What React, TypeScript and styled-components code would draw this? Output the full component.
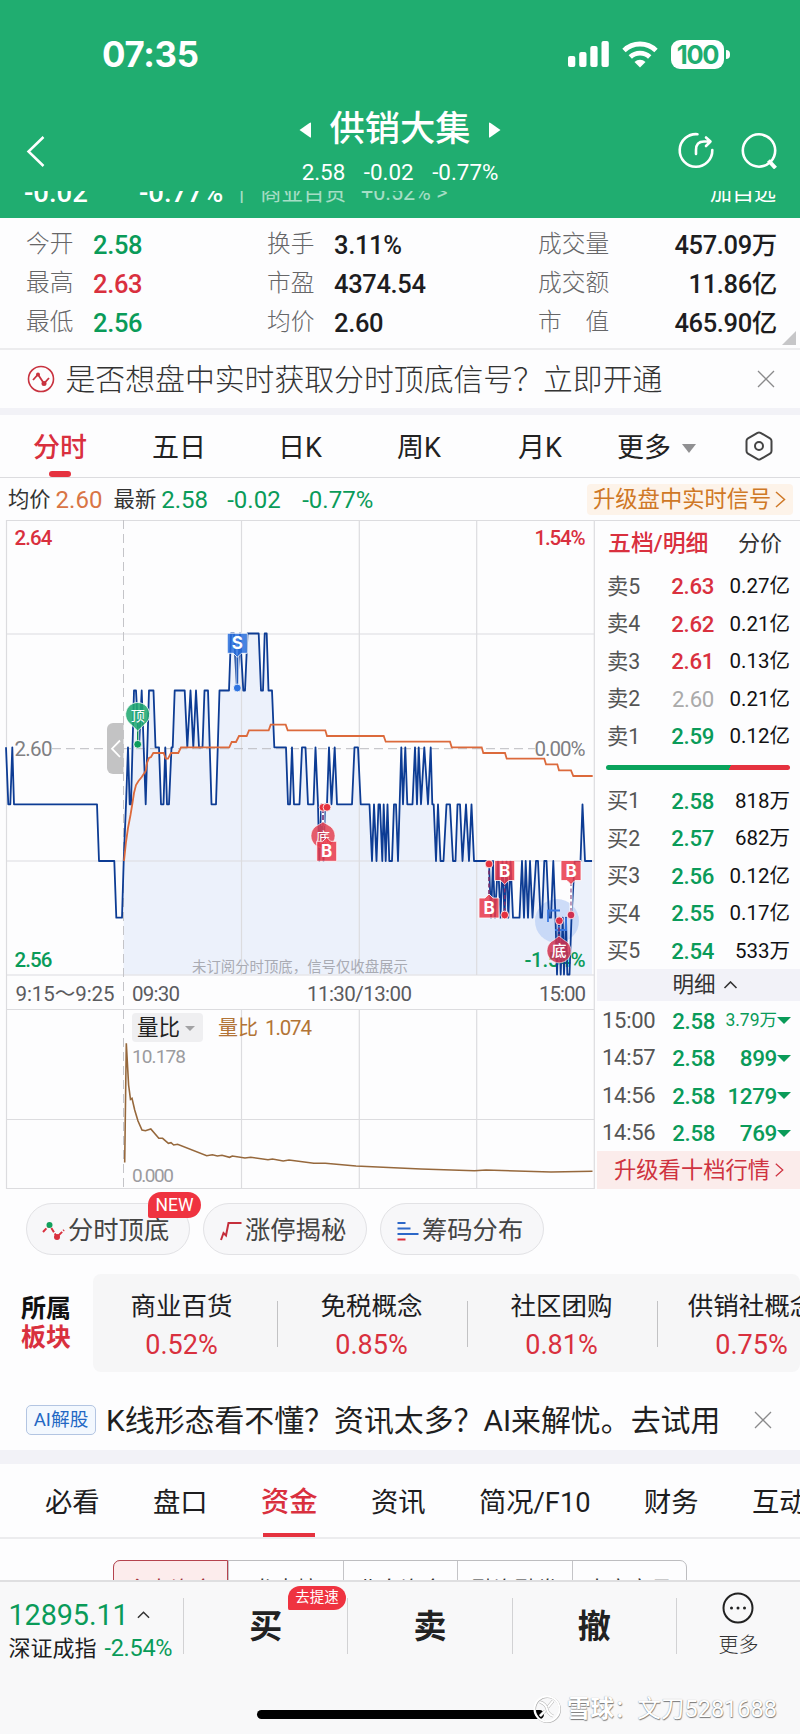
import React from "react";
import styled, { createGlobalStyle, css } from "styled-components";

const GREEN = "#0a9b59";
const RED = "#d9303e";
const HAIR = "#dcdcdf";

const GlobalStyle = createGlobalStyle`
  * { box-sizing: border-box; }
  body { margin: 0; background: #fdfdfe; }
`;

const Screen = styled.main`
  position: relative;
  width: 800px;
  height: 1734px;
  overflow: hidden;
  display: flex;
  flex-direction: column;
  background: #fdfdfe;
  color: #1d1d1f;
  font-family: Roboto, "Noto Sans CJK SC", sans-serif;
  white-space: nowrap;
  line-height: 1;
`;

/* ---------- header ---------- */

const Header = styled.header`
  height: 218px;
  flex: none;
  display: flex;
  flex-direction: column;
  background: #20ad70;
  color: #fff;
  overflow: hidden;
`;

const StatusBar = styled.div`
  height: 108px;
  flex: none;
  display: flex;
  align-items: center;
  justify-content: space-between;
  padding: 0 70px 0 102px;
`;

const Clock = styled.span`
  font: 700 34.8px/1 Inter, sans-serif;
  letter-spacing: -0.3px;
  padding-top: 1px;
`;

const StatusIcons = styled.div`
  display: flex;
  align-items: center;
  gap: 13px;
`;

const Battery = styled.div`
  position: relative;
  width: 53px;
  height: 29px;
  border-radius: 9px;
  background: #fff;
  color: #20ad70;
  font: 700 25.5px/29px Inter, sans-serif;
  letter-spacing: -1.3px;
  text-align: center;
  margin-right: 6px;
  &::after {
    content: "";
    position: absolute;
    right: -6px;
    top: 10px;
    width: 4px;
    height: 9px;
    border-radius: 0 4px 4px 0;
    background: #fff;
  }
`;

const NavRow = styled.div`
  height: 83px;
  flex: none;
  display: grid;
  grid-template-columns: 200px 400px 200px;
`;

const NavLeft = styled.div`
  padding: 28px 0 0 26px;
`;

const NavCenter = styled.div`
  display: flex;
  flex-direction: column;
  align-items: center;
`;

const StockTitle = styled.div`
  display: flex;
  align-items: center;
  gap: 18.5px;
  height: 42px;
  padding-top: 1px;
  font-size: 35.3px;
  font-weight: 500;
`;

const StockQuote = styled.div`
  display: flex;
  gap: 18.5px;
  margin-top: 10px;
  font-size: 22.4px;
  line-height: 24px;
`;

const NavRight = styled.div`
  display: flex;
  justify-content: flex-end;
  gap: 25px;
  padding: 23px 22px 0 0;
`;

const ScrolledRow = styled.div`
  height: 12px;
  overflow: hidden;
  display: flex;
  align-items: flex-end;
  padding: 0 24px 1px;
  font-size: 24px;
  line-height: 18px;
`;

const ScrolledItem = styled.span<{ $w: number; $bold?: boolean; $dim?: boolean; $end?: boolean }>`
  width: ${(p) => p.$w}px;
  ${(p) => p.$end && css`margin-left: auto; text-align: right;`}
  font-size: ${(p) => (p.$bold ? 27.5 : p.$dim ? 21.5 : 22)}px;
  font-weight: ${(p) => (p.$bold ? 500 : 400)};
  opacity: ${(p) => (p.$dim ? 0.6 : 1)};
`;

/* ---------- statistics ---------- */

const Stats = styled.section`
  position: relative;
  height: 132px;
  flex: none;
  display: grid;
  grid-template-columns: 241px 271px 239px;
  padding: 7px 0 0 26px;
  border-bottom: 2px solid #ececee;
`;

const StatColumn = styled.div`
  display: flex;
  flex-direction: column;
`;

const StatRow = styled.div<{ $spread?: boolean }>`
  height: 39px;
  display: flex;
  align-items: center;
  justify-content: ${(p) => (p.$spread ? "space-between" : "flex-start")};
`;

const StatLabel = styled.span<{ $w?: number }>`
  width: ${(p) => p.$w ?? 67}px;
  font-size: 23.7px;
  font-weight: 300;
  color: #666668;
  white-space: pre;
`;

const StatValue = styled.span<{ $color?: string }>`
  font-size: 25.5px;
  font-weight: 500;
  letter-spacing: -0.35px;
  padding-top: 3px;
  color: ${(p) => p.$color ?? "#1d1d1f"};
`;

const Corner = styled.i`
  position: absolute;
  right: 4px;
  bottom: 3px;
  border-left: 14px solid transparent;
  border-bottom: 14px solid #c6c6c8;
`;

/* ---------- notices ---------- */

const Notice = styled.section`
  height: 58px;
  flex: none;
  display: flex;
  align-items: center;
  padding: 0 25px 0 27px;
`;

const NoticeText = styled.span<{ $dark?: boolean }>`
  flex: 1;
  font-size: ${(p) => (p.$dark ? 29.9 : 29.85)}px;
  font-weight: ${(p) => (p.$dark ? 400 : 300)};
  color: ${(p) => (p.$dark ? "#1f1f21" : "#333")};
  margin-left: ${(p) => (p.$dark ? 10 : 10.5)}px;
  padding-top: 2px;
`;

const Band = styled.div<{ $h: number }>`
  height: ${(p) => p.$h}px;
  flex: none;
  background: #f2f2f7;
`;

/* ---------- period tabs ---------- */

const PeriodTabs = styled.nav`
  height: 63px;
  flex: none;
  display: flex;
  align-items: stretch;
  border-bottom: 1.5px solid ${HAIR};
`;

const PeriodTab = styled.div<{ $active?: boolean; $w: number }>`
  width: ${(p) => p.$w}px;
  flex: none;
  position: relative;
  display: flex;
  justify-content: center;
  align-items: center;
  gap: 11px;
  padding-top: 4px;
  font-size: 27px;
  font-weight: ${(p) => (p.$active ? 500 : 400)};
  color: ${(p) => (p.$active ? RED : "#222")};
  &:last-child {
    margin-left: auto;
    padding-top: 0;
  }
  ${(p) =>
    p.$active &&
    css`
      &::after {
        content: "";
        position: absolute;
        bottom: 0;
        left: 50%;
        margin-left: -11px;
        width: 22px;
        height: 6px;
        border-radius: 3px;
        background: #e5323f;
      }
    `}
`;

const DownArrow = styled.i<{ $size: number; $depth: number; $color?: string }>`
  border: ${(p) => p.$size}px solid transparent;
  border-top: ${(p) => p.$depth}px solid ${(p) => p.$color ?? "#909092"};
  border-bottom: 0;
`;

/* ---------- average/last line ---------- */

const InfoLine = styled.section`
  height: 42px;
  flex: none;
  display: flex;
  align-items: center;
  padding: 0 7px 0 8px;
`;

const InfoLabel = styled.span`
  font-size: 21.3px;
  color: #333;
  margin-right: 5px;
  padding-top: 1px;
`;

const InfoValue = styled.span<{ $color: string; $w: number }>`
  width: ${(p) => p.$w}px;
  padding-top: 2px;
  font-size: 24px;
  color: ${(p) => p.$color};
`;

const UpgradeTag = styled.div`
  margin-left: auto;
  height: 31px;
  width: 206px;
  padding-left: 6px;
  display: flex;
  align-items: center;
  gap: 4px;
  border-radius: 4px;
  background: #fdf3e9;
  color: #cf7826;
  font-size: 22.3px;
`;

/* ---------- market area ---------- */

const Market = styled.section`
  height: 669px;
  flex: none;
  display: grid;
  grid-template-columns: 595px 205px;
`;

const Book = styled.aside`
  display: flex;
  flex-direction: column;
  border-top: 1px solid ${HAIR};
`;

const BookTabs = styled.div`
  height: 46px;
  display: flex;
  align-items: center;
  justify-content: space-between;
  padding: 0 18px 0 13px;
  font-size: 22.2px;
`;

const BookTab = styled.span<{ $active?: boolean }>`
  color: ${(p) => (p.$active ? RED : "#333")};
  font-size: ${(p) => (p.$active ? 22.9 : 22)}px;
  font-weight: ${(p) => (p.$active ? 500 : 400)};
`;

const Level = styled.div<{ $trade?: boolean }>`
  height: 37.5px;
  display: grid;
  align-items: center;
  grid-template-columns: ${(p) => (p.$trade ? "60px 56px 59px 14px" : "53px 57px 73px")};
  justify-content: start;
  padding-top: ${(p) => (p.$trade ? 2 : 1)}px;
  padding-left: ${(p) => (p.$trade ? 7 : 12)}px;
`;

const LevelLabel = styled.span<{ $time?: boolean }>`
  font-size: ${(p) => (p.$time ? 22 : 21.3)}px;
  letter-spacing: ${(p) => (p.$time ? -0.3 : 0)}px;
  color: #555;
`;

const LevelPrice = styled.span<{ $color: string }>`
  font-size: 22.2px;
  text-align: right;
  padding-right: 3px;
  letter-spacing: -0.3px;
  font-weight: ${(p) => (p.$color === "#aaa" ? 400 : 500)};
  color: ${(p) => p.$color};
`;

const LevelVolume = styled.span<{ $color?: string; $small?: boolean }>`
  font-size: ${(p) => (p.$small ? 17.5 : p.$color ? 22.5 : 20.5)}px;
  text-align: right;
  color: ${(p) => p.$color ?? "#111113"};
  font-weight: ${(p) => (p.$small ? 400 : p.$color ? 500 : 400)};
  letter-spacing: ${(p) => (p.$color && !p.$small ? -0.4 : 0)}px;
`;

const RatioBar = styled.div`
  height: 5px;
  margin: 10px 10px 12px 11px;
  flex: none;
  border-radius: 3px;
  background: linear-gradient(120deg, #0aa35c 0 67%, #e5323f 67%);
`;

const DetailBar = styled.div`
  height: 32px;
  display: flex;
  align-items: center;
  justify-content: center;
  gap: 7px;
  padding-left: 13px;
  margin-left: 2px;
  background: #f2f2f8;
  color: #333;
  font-size: 21.5px;
`;

const TenLevels = styled.div`
  flex: 1;
  display: flex;
  align-items: center;
  gap: 4px;
  padding-left: 17px;
  margin-left: 2px;
  background: #fbeceb;
  color: #cf3340;
  font-size: 22.3px;
`;

/* ---------- tool chips ---------- */

const Chips = styled.section`
  height: 85px;
  flex: none;
  display: flex;
  gap: 13px;
  padding: 14px 26px 0;
`;

const Chip = styled.div`
  position: relative;
  width: 164px;
  height: 52px;
  display: flex;
  align-items: center;
  gap: 3px;
  padding: 3px 0 0 15px;
  border: 1px solid #e2e2e5;
  border-radius: 26px;
  background: #f7f7f9;
  color: #444;
  font-size: 25.3px;
`;

const Flag = styled.b<{ $top: number; $left: number; $w: number; $h: number; $size: number }>`
  position: absolute;
  top: ${(p) => p.$top}px;
  left: ${(p) => p.$left}px;
  width: ${(p) => p.$w}px;
  height: ${(p) => p.$h}px;
  border-radius: 13px 13px 13px 2px;
  background: #ef3340;
  color: #fff;
  font-size: ${(p) => p.$size}px;
  font-weight: 400;
  line-height: ${(p) => p.$h}px;
  text-align: center;
`;

/* ---------- sectors ---------- */

const Sectors = styled.section`
  height: 98px;
  flex: none;
  display: flex;
`;

const SectorHeading = styled.div`
  width: 93px;
  flex: none;
  padding: 20px 0 0 21px;
  font-size: 25px;
  font-weight: 700;
  line-height: 29px;
  color: #111;
  em {
    display: block;
    font-style: normal;
    color: ${RED};
  }
`;

const SectorTrack = styled.div`
  flex: 1;
  min-width: 0;
  overflow: hidden;
  display: flex;
  border-radius: 8px;
  background: #f6f6f7;
`;

const Sector = styled.div<{ $first?: boolean }>`
  flex: none;
  width: ${(p) => (p.$first ? 185 : 190)}px;
  padding-right: ${(p) => (p.$first ? 8 : 3)}px;
  display: flex;
  flex-direction: column;
  align-items: center;
  padding-top: 19px;
  font-size: 25.5px;
  line-height: 27px;
  background: linear-gradient(#c2c2c4, #c2c2c4) right 27px / 1px 46px no-repeat;
  strong {
    margin-top: 12px;
    font-weight: 400;
    font-size: 27px;
    color: ${RED};
  }
`;

const AiTag = styled.span`
  width: 70px;
  height: 30px;
  flex: none;
  border: 1.5px solid #b3c5e2;
  border-radius: 5px;
  background: #f3f8fe;
  color: #2468c4;
  font-size: 18.7px;
  line-height: 28px;
  text-align: center;
`;

const AiNotice = styled(Notice)`
  height: 78px;
  padding: 17px 28px 0 26px;
`;

/* ---------- content tabs ---------- */

const ContentTabs = styled.nav`
  height: 75px;
  flex: none;
  display: flex;
  gap: 53.4px;
  padding-left: 45px;
  border-bottom: 2px solid #ececee;
  font-size: 27.3px;
  line-height: 78px;
`;

const ContentTab = styled.span<{ $active?: boolean }>`
  flex: none;
  height: 73px;
  font-size: ${(p) => (p.$active ? 28.3 : 27.3)}px;
  font-weight: ${(p) => (p.$active ? 500 : 400)};
  color: ${(p) => (p.$active ? RED : "#1d1d1f")};
  background: ${(p) => (p.$active ? "linear-gradient(#e5323f, #e5323f) center bottom / 52px 4px no-repeat" : "none")};
`;

const SegmentArea = styled.section`
  height: 41px;
  flex: none;
  overflow: hidden;
  padding: 21px 113px 0;
`;

const Segments = styled.div`
  height: 60px;
  display: grid;
  grid-template-columns: repeat(5, 1fr);
  border: 1px solid #bdbdc0;
  border-radius: 7px;
`;

const Segment = styled.span<{ $active?: boolean }>`
  padding-top: 18px;
  text-align: center;
  font-size: 21.5px;
  color: ${(p) => (p.$active ? "#a3313b" : "#333")};
  border-left: ${(p) => (p.$active ? "none" : "1px solid #c4c4c7")};
  ${(p) =>
    p.$active &&
    css`
      margin: -1px 0 0 -1px;
      border: 1.5px solid #b5434e;
      border-radius: 7px 0 0 0;
      background: #fcecec;
    `}
`;

/* ---------- bottom bar ---------- */

const BottomBar = styled.footer`
  flex: 1;
  display: flex;
  flex-direction: column;
  border-top: 2px solid #dfdfe1;
  background: #f8f8f9;
`;

const Actions = styled.div`
  height: 88px;
  display: flex;
  padding-top: 16px;
`;

const IndexBox = styled.div`
  width: 184px;
  height: 56px;
  flex: none;
  padding: 3px 0 0 8.5px;
  border-right: 1.5px solid #d2d2d4;
`;

const IndexLine = styled.div<{ $second?: boolean }>`
  display: flex;
  align-items: center;
  gap: ${(p) => (p.$second ? 8 : 8)}px;
  height: ${(p) => (p.$second ? 28 : 34)}px;
  margin-top: ${(p) => (p.$second ? 3 : -3)}px;
  font-size: ${(p) => (p.$second ? 22 : 28.8)}px;
  span { color: ${GREEN}; letter-spacing: -0.1px; }
  ${(p) => p.$second && css`span { font-size: 23.5px; letter-spacing: -0.3px; }`}
`;

const Action = styled.div`
  position: relative;
  width: 164.3px;
  height: 56px;
  display: flex;
  align-items: center;
  justify-content: center;
  font-size: 33px;
  font-weight: 700;
  color: #222;
  border-right: 1.5px solid #d2d2d4;
`;

const More = styled.div`
  flex: 1;
  display: flex;
  flex-direction: column;
  align-items: center;
  margin-top: -6px;
  gap: 11px;
  font-size: 20px;
  font-weight: 300;
  color: #333;
`;

const HomeIndicator = styled.div`
  width: 287px;
  height: 9px;
  margin: 40px auto 0;
  border-radius: 5px;
  background: #000;
`;

const Watermark = styled.div`
  position: absolute;
  left: 533px;
  top: 1694px;
  height: 30px;
  display: flex;
  align-items: center;
  gap: 6px;
  font: 400 23.5px/30px Roboto, "Noto Sans CJK SC", sans-serif;
  color: #fff;
  text-shadow: 0.5px 0.5px 1px #777, -0.3px -0.3px 1px #aaa;
  b { font-weight: 700; }
`;

/* ---------- chart data ---------- */

const levelY = [633.5, 690.5, 747.3, 804.3, 861, 917.7, 974.5];
const prices: [number, number][] = [
  [6, 2], [8.3, 3], [10.3, 3], [12.3, 2], [14, 3], [97, 3], [99, 4], [114.3, 4], [116.3, 5], [122, 5], [123.7, 4], [126, 3],
  [128, 2], [129.7, 3], [131, 3], [134, 1], [136, 1], [139, 2], [141.7, 1], [145.7, 3], [149, 1], [153.5, 1],
  [155.5, 2], [159, 2], [161, 3], [163.5, 3], [165.3, 2], [167, 3], [169, 3], [171.5, 2], [172.7, 2], [174.7, 1], [184.7, 1],
  [187.3, 2], [190.5, 1], [193.3, 2], [196, 1], [199, 2], [202.5, 2], [204.5, 1], [208, 1], [211.5, 3], [216, 3],
  [219.5, 1], [229, 1], [231, 0], [234, 0], [237, 1], [240, 0], [243.3, 1], [245, 1], [247.5, 0], [258.7, 0],
  [261, 1], [263, 1], [264.7, 0], [266.7, 0], [268.5, 1], [272, 1], [274.3, 2], [286, 2], [288, 3], [290, 3],
  [292, 2], [294, 3], [299.5, 3], [302, 2], [305.5, 2], [308, 3], [313.5, 3], [315.5, 2], [318, 3], [319.3, 4],
  [321.3, 3], [323.5, 4], [325, 3], [327, 3], [329, 2], [331.5, 3], [334.7, 2], [337, 3], [352, 3], [354.5, 2], [358, 2], [360.7, 3],
  [369.5, 3], [372, 4], [374, 3], [376.5, 4], [378.5, 3], [380, 3], [382.3, 4], [383.7, 3], [385.7, 4], [387.5, 3],
  [389.3, 4], [392, 4], [394, 3], [396, 3], [398, 4], [401.3, 2], [403, 3], [405.3, 2], [407.3, 3], [412.5, 3],
  [415, 2], [417, 3], [418.7, 2], [421, 3], [424.3, 2], [428, 3], [430.7, 2], [432.3, 3], [433.7, 3], [436, 4],
  [438, 3], [440.5, 4], [443.5, 4], [446.5, 3], [450, 3], [453, 4], [455.5, 4], [457.5, 3], [460, 3], [462.5, 4],
  [466, 3], [469, 4], [471.5, 3], [474, 4], [489, 4], [491, 5], [493, 4], [495, 5], [498, 4], [500.5, 5], [502.5, 4],
  [504.5, 5], [506.5, 4], [508.3, 5], [510.5, 4], [513, 5], [519.5, 5], [522, 4], [524, 5], [525.7, 4], [528, 5],
  [530, 4], [532.5, 5], [536, 4], [538, 4], [540.5, 5], [542, 5], [544.3, 4], [546.5, 4], [549, 5], [551, 5], [553.3, 4], [555.5, 5],
  [557, 6], [559, 5], [560.7, 6], [562.7, 5], [564, 6], [566, 5], [567.3, 6], [569.5, 6], [571.5, 5], [574.7, 4],
  [580.5, 4], [582.5, 3], [585, 4], [592, 4],
];
const pricePoints = prices.map(([x, l]) => `${x},${levelY[l]}`);
const areaPoints = ["123.5,974.5", ...prices.slice(10).map(([x, l]) => `${x},${levelY[l]}`), "592,974.5"].join(" ");

const average =
  "124,861 126,842 128,828 130.5,815 132.3,804 134,793 136,785 138.5,781 141.7,777 145.7,771 147,763 149,758 151,757 153.3,753 163.7,753 165.7,758.7 168,758.7 171,753 178.3,753 181,747.3 229.3,747.3 231.7,742 236,742 239,736 246.7,736 249,730.3 268.7,730.3 270.7,724.7 285.7,724.7 287.7,730.3 325.3,730.3 327,736 383.7,736 385.7,741.7 450,741.7 451.7,747.3 481.7,747.3 483.3,753 505,753 506.7,758.7 544.3,758.7 546,764.3 557.3,764.3 559,770.3 571,770.3 573.3,776 592.7,776";

const volumeRatio =
  "124.7,1162.5 126.3,1043.3 128.6,1085 130.5,1099.3 132,1098.3 134.7,1110 138,1121 142,1130 145.4,1130.7 150.8,1129 158.8,1138.3 162.6,1138.3 168.4,1143.3 171,1142.7 173.7,1145 177.6,1144.3 206.7,1155.7 212.4,1154.7 217.4,1156 222,1155.3 229.6,1157.3 232.3,1156 245,1158 250.7,1157.3 268,1159.7 272.5,1159 283.2,1161 289,1160 313.8,1163.3 325.3,1163.3 356,1166 421,1169 474.5,1170.7 486,1170 551,1172 592.5,1171.3";

type PinProps = { x: number; y: number; up?: boolean; color: string; text: string };
const Pin = ({ x, y, up, color, text }: PinProps) => (
  <g>
    <path
      d={up ? `M${x - 10} ${y - 10}h6l4 -4l4 4h6v20h-20z` : `M${x - 10} ${y - 10}h20v20h-6l-4 4l-4 -4h-6z`}
      fill={color}
      fillOpacity={0.86}
      stroke="#fff"
      strokeWidth={0.8}
    />
    <text x={x} y={y + 6} fontSize={17} fontWeight={700} fill="#fff" textAnchor="middle" fontFamily="Inter">
      {text}
    </text>
  </g>
);

const Dot = ({ x, y, color }: { x: number; y: number; color: string }) => (
  <circle cx={x} cy={y} r={3.9} fill={color} stroke="#fff" strokeWidth={0.8} />
);

const Chart = () => (
  <svg width="595" height="669" viewBox="0 520 595 669" fontSize={20.5}>
    <polygon points={areaPoints} fill="#ecf1fb" />
    <g stroke={HAIR} strokeWidth={1.2} fill="none">
      <path d="M6.5 520.5H594.3V1188.5H6.5ZM6 634H594M6 861H594M6 975H594M6 1009.5H594M6 1119.5H594" />
      <path d="M241.5 520V975M359.3 520V975M476.7 520V975M241.5 1009V1189M359.3 1009V1189M476.7 1009V1189" />
    </g>
    <path d="M123.5 520V1189" stroke="#c4c4c8" strokeDasharray="9 5" />
    <path d="M52 748.7H535" stroke="#bcbcc0" strokeDasharray="9 5" />

    <circle cx="557" cy="921" r="22" fill="#bcd0f6" fillOpacity={0.75} />
    <g fill="#808083">
      <text x="14.5" y="756" textLength={38}>2.60</text>
      <text x="534.500" y="756" textLength={51}>0.00%</text>
    </g>
    <text x="14.5" y="544.5" fill={RED} fontWeight={500} textLength={38}>2.64</text>
    <text x="534.500" y="544.5" fill={RED} fontWeight={500} textLength={51}>1.54%</text>
    <text x="14.5" y="966.5" fill={GREEN} fontWeight={500} textLength={38}>2.56</text>
    <text x="524.500" y="966.5" fill={GREEN} fontWeight={500} textLength={61}>-1.54%</text>
    <text x="192" y="971.5" fill="#a9abb3" fontSize={14.4}>未订阅分时顶底，信号仅收盘展示</text>

    <path d="M123.5 723H113a6 6 0 0 0 -6 6V768a6 6 0 0 0 6 6H123.5Z" fill="#c3c3c4" />
    <path d="M120 740.5L112 748.7L120 757" fill="none" stroke="#fff" strokeWidth={1.8} />

    <polyline points={pricePoints.join(" ")} fill="none" stroke="#0d3c94" strokeWidth={1.8} strokeLinejoin="round" />
    <polyline points={average} fill="none" stroke="#dc6a3c" strokeWidth={1.8} />

    <path d="M555 910.5H548V922M555 910.5H560M555 930H566V918M559 926V932" stroke="#3a78e0" strokeWidth={1.8} fill="none" />

    <path d="M237.3 655V688" stroke="#fff" strokeWidth={3} />
    <path d="M237.3 655V688" stroke="#2059b8" strokeWidth={1.8} />
    <Pin x={237.3} y={643.3} color="#2a6fdc" text="S" />
    <Dot x={237.3} y={688} color="#2f74e0" />

    <path d="M137.7 728V744" stroke="#fff" strokeWidth={3} />
    <path d="M137.7 728V744" stroke="#0a8a55" strokeWidth={1.5} />
    <path d="M131 724.5L137.7 731L144.3 724.5A12 12 0 1 0 131 724.5Z" fill="#21a871" fillOpacity={0.88} stroke="#fff" strokeWidth={0.8} />
    <text x="137.7" y="720.5" fontSize={14} fill="#fff" textAnchor="middle">顶</text>
    <Dot x={137.7} y={744.3} color="#0c9c5c" />

    <path d="M323 808V826" stroke="#fff" strokeWidth={3} />
    <path d="M323 808V826" stroke="#6c2a78" strokeWidth={1.6} strokeDasharray="5 2" />
    <path d="M318 825L323 822L328 825A12 12 0 1 1 318 825Z" fill="#e34353" fillOpacity={0.86} stroke="#fff" strokeWidth={0.6} />
    <text x="323" y="842" fontSize={14} fill="#fff" textAnchor="middle">底</text>
    <Pin x={326.7} y={851.3} up color="#e93a4a" text="B" />
    <Dot x={323} y={807.3} color="#e5323f" />
    <Dot x={327} y={807.3} color="#e5323f" />

    <path d="M571 882V911" stroke="#fff" strokeWidth={3} />
    <g strokeWidth={1.6} strokeDasharray="4 2.5" stroke="#7a2c6c">
      <path d="M489 864V896M504.7 882V914M559 921V940" />
      <path d="M571 882V914" strokeOpacity={0.6} />
    </g>
    <Pin x={489} y={908} up color="#e93a4a" text="B" />
    <Pin x={504.7} y={870.5} color="#e93a4a" text="B" />
    <Pin x={571} y={870.5} color="#e93a4a" text="B" />
    <Dot x={489} y={864} color="#e5323f" />
    <Dot x={504.7} y={915} color="#e5323f" />
    <Dot x={571} y={915} color="#d03050" />
    <Dot x={559.3} y={920.7} color="#d8304a" />
    <path d="M554 940L559 936L564 940A12 12 0 1 1 554 940Z" fill="#d23350" fillOpacity={0.86} stroke="#fff" strokeWidth={0.6} />
    <text x="559" y="956" fontSize={15} fontWeight={500} fill="#fff" textAnchor="middle">底</text>

    <g fill="#5b5b5e" fontSize={20.5}>
      <text x="15.5" y="1000.500" textLength={99}>9:15～9:25</text>
      <text x="132" y="1000.500" textLength={48}>09:30</text>
      <text x="307" y="1000.500" textLength={105}>11:30/13:00</text>
      <text x="586" y="1000.500" textAnchor="end" textLength={47}>15:00</text>
    </g>

    <rect x="132" y="1013" width="71" height="29" rx="4" fill="#efeff1" />
    <text x="137" y="1035" fontSize={21.5} fill="#222">量比</text>
    <path d="M185 1026H195L190 1031Z" fill="#a2a2a4" />
    <g fill="#b27436">
      <text x="218" y="1035" fontSize={20}>量比</text>
      <text x="265" y="1035" textLength={47}>1.074</text>
    </g>
    <g fill="#9b9b9e" fontSize={19}>
      <text x="132" y="1063" textLength={54}>10.178</text>
      <text x="132" y="1181.5" textLength={42}>0.000</text>
    </g>
    <polyline points={volumeRatio} fill="none" stroke="#96683c" strokeWidth={1.6} />
  </svg>
);

/* ---------- small icons ---------- */

const Close = () => (
  <svg width="18" height="18" viewBox="0 0 18 18" stroke="#8a8a8c" strokeWidth="1.3">
    <path d="M1 1L17 17M17 1L1 17" />
  </svg>
);

const Chevron = ({ h = 17, color }: { h?: number; color: string }) => (
  <svg width="11" height={h} viewBox="0 0 11 17" fill="none" stroke={color} strokeWidth="1.5">
    <path d="M1 1L9.500 8.500L1 16" />
  </svg>
);

const Caret = ({ w }: { w: number }) => (
  <svg width={w} height="8" viewBox="0 0 14 8" fill="none" stroke="#333" strokeWidth="1.6">
    <path d="M1 7L7 1L13 7" />
  </svg>
);

const stats1 = [["今开", "2.58", GREEN], ["最高", "2.63", RED], ["最低", "2.56", GREEN]];
const stats2 = [["换手", "3.11%"], ["市盈", "4374.54"], ["均价", "2.60"]];
const stats3 = [["成交量", "457.09万"], ["成交额", "11.86亿"], ["市　值", "465.90亿"]];
const asks = [["卖5", "2.63", "0.27亿"], ["卖4", "2.62", "0.21亿"], ["卖3", "2.61", "0.13亿"], ["卖2", "2.60", "0.21亿"], ["卖1", "2.59", "0.12亿"]];
const askColors = [RED, RED, RED, "#aaa", GREEN];
const bids = [["买1", "2.58", "818万"], ["买2", "2.57", "682万"], ["买3", "2.56", "0.12亿"], ["买4", "2.55", "0.17亿"], ["买5", "2.54", "533万"]];
const trades = [["15:00", "3.79万"], ["14:57", "899"], ["14:56", "1279"], ["14:56", "769"]];
const sectors = [["商业百货", "0.52%"], ["免税概念", "0.85%"], ["社区团购", "0.81%"], ["供销社概念", "0.75%"]];

export default function App() {
  return (
    <>
      <GlobalStyle />
      <Screen>
        <Header>
          <StatusBar>
            <Clock>07:35</Clock>
            <StatusIcons>
              <svg width="41" height="26" fill="#fff">
                <rect x="0" y="15" width="7.300" height="11" rx="2" />
                <rect x="11.200" y="11" width="7.300" height="15" rx="2" />
                <rect x="22.300" y="5" width="7.300" height="21" rx="2" />
                <rect x="33.500" y="0" width="7.300" height="26" rx="2" />
              </svg>
              <svg width="36" height="27" viewBox="0 0 36 27" fill="none" stroke="#fff" strokeWidth="4.800">
                <path d="M2 9.500A23 23 0 0 1 34 9.500" />
                <path d="M8.300 16A14 14 0 0 1 27.700 16" />
                <path d="M12.500 21A8 8 0 0 1 23.500 21L18 26.500Z" fill="#fff" stroke="none" />
              </svg>
              <Battery>100</Battery>
            </StatusIcons>
          </StatusBar>
          <NavRow>
            <NavLeft>
              <svg width="19" height="31" viewBox="0 0 19 31" fill="none" stroke="#fff" strokeWidth="2.500">
                <path d="M17.500 1L2.500 15.500L17.500 30" />
              </svg>
            </NavLeft>
            <NavCenter>
              <StockTitle>
                <svg width="12" height="16" fill="#fff"><path d="M12 1V15Q12 16 10.500 15L0.500 8L10.500 1Q12 0 12 1Z" /></svg>
                供销大集
                <svg width="12" height="16" fill="#fff"><path d="M0 1V15Q0 16 1.500 15L11.500 8L1.500 1Q0 0 0 1Z" /></svg>
              </StockTitle>
              <StockQuote>
                <span>2.58</span>
                <span>-0.02</span>
                <span>-0.77%</span>
              </StockQuote>
            </NavCenter>
            <NavRight>
              <svg width="38" height="38" viewBox="0 0 38 38" fill="none" stroke="#fff" strokeWidth="2.600" strokeLinecap="round" strokeLinejoin="round">
                <path d="M20.500 3.200A16.300 16.300 0 1 0 35.300 19" />
                <path d="M19 23V19Q19 10.500 27 10.500H33M29 6.500L33.500 10.500L29 15" />
              </svg>
              <svg width="38" height="38" viewBox="0 0 38 38" fill="none" stroke="#fff" strokeWidth="2.600">
                <circle cx="19" cy="19.500" r="16.200" />
                <path d="M28.500 29.500L35.500 37" strokeWidth="4" />
              </svg>
            </NavRight>
          </NavRow>
          <ScrolledRow>
            <ScrolledItem $w={115} $bold>-0.02</ScrolledItem>
            <ScrolledItem $w={100} $bold>-0.77%</ScrolledItem>
            <ScrolledItem $w={21} $dim>|</ScrolledItem>
            <ScrolledItem $w={101} $dim>商业百货</ScrolledItem>
            <ScrolledItem $w={110} $dim>+0.52% &gt;</ScrolledItem>
            <ScrolledItem $w={68} $end>加自选</ScrolledItem>
          </ScrolledRow>
        </Header>

        <Stats>
          <StatColumn>
            {stats1.map(([l, v, c]) => (
              <StatRow key={l}><StatLabel>{l}</StatLabel><StatValue $color={c}>{v}</StatValue></StatRow>
            ))}
          </StatColumn>
          <StatColumn>
            {stats2.map(([l, v]) => (
              <StatRow key={l}><StatLabel>{l}</StatLabel><StatValue>{v}</StatValue></StatRow>
            ))}
          </StatColumn>
          <StatColumn>
            {stats3.map(([l, v]) => (
              <StatRow key={l} $spread><StatLabel $w={75}>{l}</StatLabel><StatValue>{v}</StatValue></StatRow>
            ))}
          </StatColumn>
          <Corner />
        </Stats>

        <Notice>
          <svg width="28" height="28" viewBox="0 0 28 28" fill="none" stroke="#c8323f" strokeWidth="1.600">
            <circle cx="14" cy="14" r="12.500" />
            <path d="M6 15L11 9.500L17 18.500L22 13" strokeWidth="1.800" />
            <circle cx="11" cy="9.500" r="2" fill="#c8323f" stroke="none" />
            <circle cx="17" cy="18.500" r="2.500" fill="#c8323f" stroke="none" />
          </svg>
          <NoticeText>是否想盘中实时获取分时顶底信号？立即开通</NoticeText>
          <Close />
        </Notice>
        <Band $h={7} />

        <PeriodTabs>
          <PeriodTab $w={120} $active>分时</PeriodTab>
          <PeriodTab $w={118}>五日</PeriodTab>
          <PeriodTab $w={124}>日K</PeriodTab>
          <PeriodTab $w={114}>周K</PeriodTab>
          <PeriodTab $w={128}>月K</PeriodTab>
          <PeriodTab $w={105}>更多 <DownArrow $size={7} $depth={9} /></PeriodTab>
          <PeriodTab $w={82}>
            <svg width="28" height="30" viewBox="0 0 28 30" fill="none" stroke="#444" strokeWidth="2">
              <path d="M12.500 1.800Q14 1 15.500 1.800L25 7.300Q26.500 8.200 26.500 10V20Q26.500 21.800 25 22.700L15.500 28.200Q14 29 12.500 28.200L3 22.700Q1.500 21.800 1.500 20V10Q1.500 8.200 3 7.300Z" />
              <circle cx="14" cy="15" r="4" />
            </svg>
          </PeriodTab>
        </PeriodTabs>

        <InfoLine>
          <InfoLabel>均价</InfoLabel>
          <InfoValue $w={58} $color="#d97545">2.60</InfoValue>
          <InfoLabel>最新</InfoLabel>
          <InfoValue $w={66} $color={GREEN}>2.58</InfoValue>
          <InfoValue $w={75} $color={GREEN}>-0.02</InfoValue>
          <InfoValue $w={80} $color={GREEN}>-0.77%</InfoValue>
          <UpgradeTag>升级盘中实时信号<Chevron color="#cf7826" /></UpgradeTag>
        </InfoLine>

        <Market>
          <Chart />
          <Book>
            <BookTabs>
              <BookTab $active>五档/明细</BookTab>
              <BookTab>分价</BookTab>
            </BookTabs>
            {asks.map(([l, p, v], i) => (
              <Level key={l}><LevelLabel>{l}</LevelLabel><LevelPrice $color={askColors[i]}>{p}</LevelPrice><LevelVolume>{v}</LevelVolume></Level>
            ))}
            <RatioBar />
            {bids.map(([l, p, v]) => (
              <Level key={l}><LevelLabel>{l}</LevelLabel><LevelPrice $color={GREEN}>{p}</LevelPrice><LevelVolume>{v}</LevelVolume></Level>
            ))}
            <DetailBar>明细 <Caret w={15} /></DetailBar>
            {trades.map(([t, v], i) => (
              <Level key={i} $trade>
                <LevelLabel $time>{t}</LevelLabel>
                <LevelPrice $color={GREEN}>2.58</LevelPrice>
                <LevelVolume $color={GREEN} $small={i === 0}>{v}</LevelVolume>
                <DownArrow $size={7} $depth={7} $color={GREEN} />
              </Level>
            ))}
            <TenLevels>升级看十档行情<Chevron h={14} color="#cf3340" /></TenLevels>
          </Book>
        </Market>

        <Chips>
          <Chip>
            <svg width="23" height="20" viewBox="0 0 23 20" fill="none" stroke="#d9303e" strokeWidth="2">
              <path d="M1 11L7.500 4L15 16L22 9" strokeDasharray="5 1.500" />
              <circle cx="7.500" cy="4" r="3" fill="#12a05c" stroke="none" />
              <circle cx="15" cy="16" r="3" fill="#d9303e" stroke="none" />
            </svg>
            分时顶底
            <Flag $top={-12} $left={121} $w={53} $h={26} $size={17.5}>NEW</Flag>
          </Chip>
          <Chip>
            <svg width="23" height="20" viewBox="0 0 22 20" fill="none" stroke="#c52f3c" strokeWidth="2">
              <path d="M1.500 19L4 12L6.500 14.500L9 2H22" />
            </svg>
            涨停揭秘
          </Chip>
          <Chip>
            <svg width="23" height="20" viewBox="0 0 22 20" fill="none" strokeWidth="2">
              <path d="M1 2H9M1 7.500H14M1 13H22" stroke="#2c67c8" />
              <path d="M1 18.500H9" stroke="#d9303e" />
            </svg>
            筹码分布
          </Chip>
        </Chips>

        <Sectors>
          <SectorHeading>所属<em>板块</em></SectorHeading>
          <SectorTrack>
            {sectors.map(([n, p], i) => (
              <Sector key={n} $first={i === 0}>{n}<strong>{p}</strong></Sector>
            ))}
          </SectorTrack>
        </Sectors>

        <AiNotice>
          <AiTag>AI解股</AiTag>
          <NoticeText $dark>K线形态看不懂？资讯太多？AI来解忧。去试用</NoticeText>
          <Close />
        </AiNotice>
        <Band $h={14} />

        <ContentTabs>
          <ContentTab>必看</ContentTab>
          <ContentTab>盘口</ContentTab>
          <ContentTab $active>资金</ContentTab>
          <ContentTab>资讯</ContentTab>
          <ContentTab>简况/F10</ContentTab>
          <ContentTab>财务</ContentTab>
          <ContentTab>互动</ContentTab>
        </ContentTabs>
        <SegmentArea>
          <Segments>
            <Segment $active>主力资金</Segment>
            <Segment>龙虎榜</Segment>
            <Segment>北向资金</Segment>
            <Segment>融资融券</Segment>
            <Segment>大宗交易</Segment>
          </Segments>
        </SegmentArea>

        <BottomBar>
          <Actions>
            <IndexBox>
              <IndexLine><span>12895.11</span><Caret w={13} /></IndexLine>
              <IndexLine $second>深证成指<span>-2.54%</span></IndexLine>
            </IndexBox>
            <Action>买<Flag $top={-12} $left={104} $w={58} $h={24} $size={14.5}>去提速</Flag></Action>
            <Action>卖</Action>
            <Action>撤</Action>
            <More>
              <svg width="32" height="32" viewBox="0 0 32 32" fill="none" stroke="#222" strokeWidth="2">
                <circle cx="16" cy="16" r="14.500" />
                <g fill="#222" stroke="none">
                  <circle cx="9.500" cy="16" r="1.500" /><circle cx="16" cy="16" r="1.500" /><circle cx="22.500" cy="16" r="1.500" />
                </g>
              </svg>
              更多
            </More>
          </Actions>
          <HomeIndicator />
        </BottomBar>
        <Watermark>
          <svg width="28" height="28" viewBox="0 0 28 28" fill="none" stroke="#fff" strokeWidth="2">
            <circle cx="14.500" cy="14.500" r="12.500" stroke="#a8a8a8" />
            <circle cx="14" cy="14" r="12.500" />
            <path d="M7 7Q13 9 14 14Q15 19 20 21M20 6L15 12M12 16L7 21" stroke="#b0b0b0" strokeWidth="3" />
            <path d="M7 7Q13 9 14 14Q15 19 20 21M20 6L15 12M12 16L7 21" />
          </svg>
          <span><b>雪球</b>：文刀5281688</span>
        </Watermark>
      </Screen>
    </>
  );
}
